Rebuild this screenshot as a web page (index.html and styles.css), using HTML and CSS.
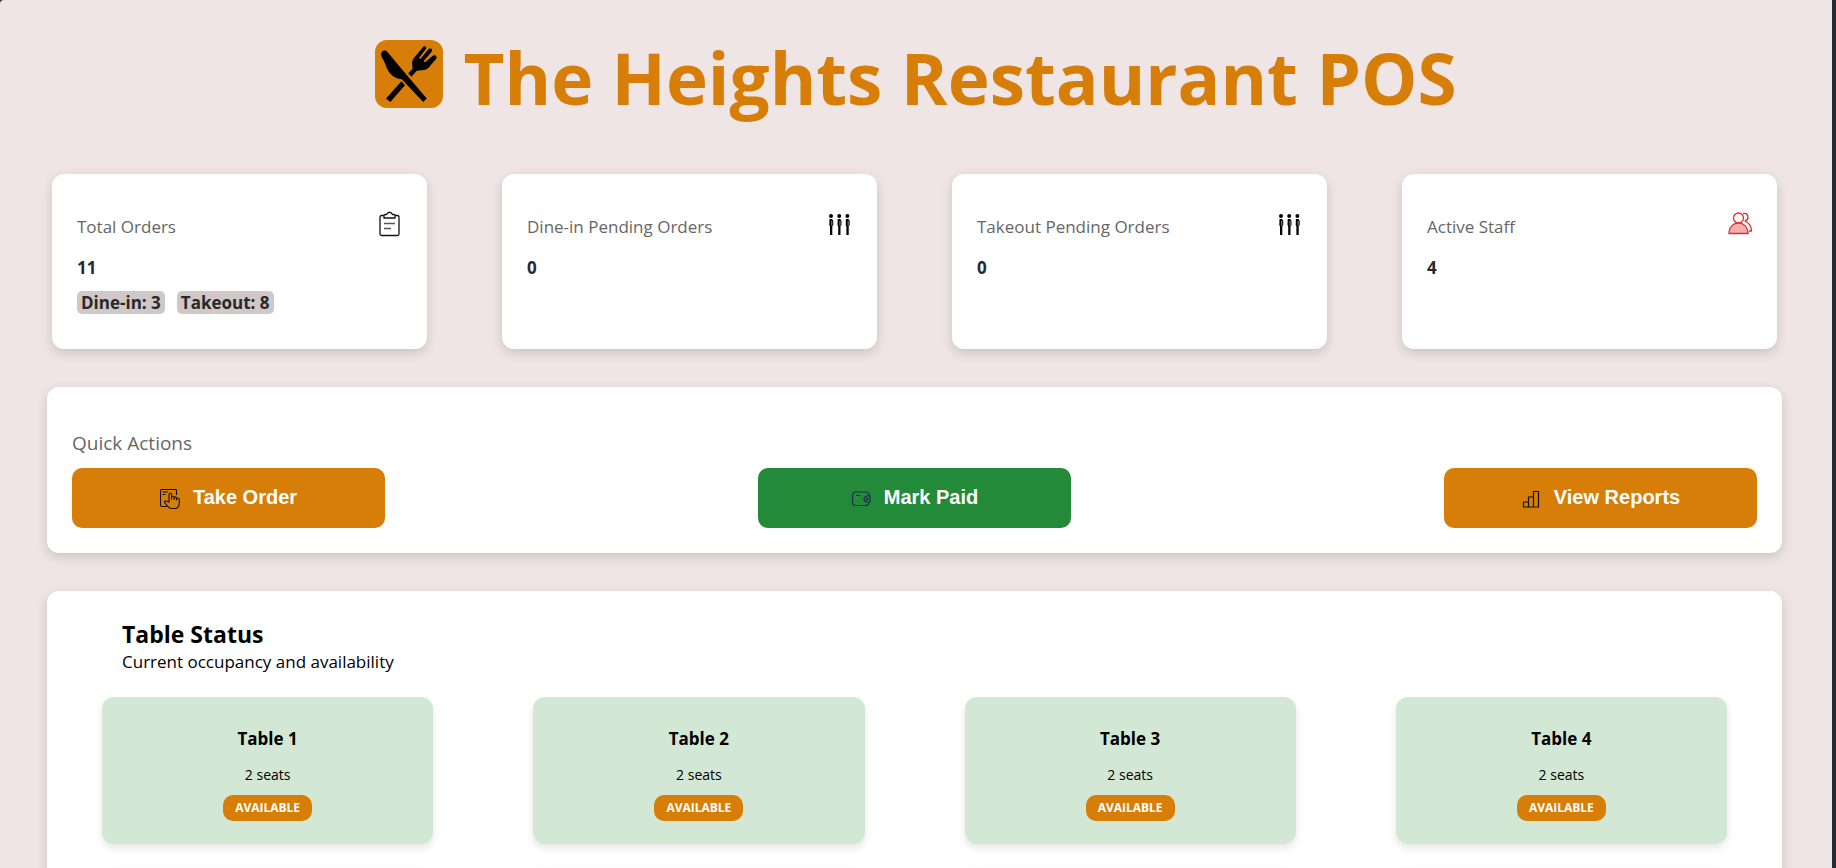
FILE: index.html
```html
<!DOCTYPE html>
<html lang="en">
<head>
<meta charset="utf-8">
<title>The Heights Restaurant POS</title>
<link rel="stylesheet" href="styles.css">
</head>
<body>
<svg width="0" height="0" class="defs" aria-hidden="true">
  <symbol id="people" viewBox="0 0 24 26">
    <g id="person"><circle cx="3" cy="5" r="2"/><path d="M1.500 8h2.600l1.200 2v4l-1 1.200V24H2v-8.500L1.300 14z"/><path d="M3.800 10v4.500" stroke="#fff" stroke-width=".6"/></g>
    <use href="#person" x="8.200"/><use href="#person" x="16.400"/>
  </symbol>
</svg>
<div class="page">
  <header class="header">
    <svg class="logo" viewBox="0 0 68 68" aria-hidden="true">
      <g transform="scale(.357 .333) translate(-45 -60)">
      <path d="M62 105C61 92 73 88 80 96L122 150L190 236L180 246L120 178C108 176 96 172 86 158C76 145 75 130 64 112Z"/>
      <path d="M119 184L129 196L88 246L76 236Z"/>
      <path d="M138 160L150 147L149 125Q150 120 154 114L178 83C183 74 193 80 187 88L168 114L172 117L193 90C199 81 209 88 203 96L181 124L185 127L206 108C213 102 221 110 216 117L195 143Q190 149 182 150L162 152L147 170Z"/>
      </g>
    </svg>
    <h1 class="title">The Heights Restaurant POS</h1>
  </header>
  <main class="content">
    <section class="stats">
      <article class="card stat">
        <div class="stat-head"><h2>Total Orders</h2>
          <svg class="icon" viewBox="0 0 24 26" fill="none" stroke="#111" stroke-width="1.300"><path d="M6 4.500H3.500q-1.500 0-1.500 1.500v17q0 1.500 1.500 1.500h16q1.500 0 1.500-1.500V6q0-1.500-1.500-1.500H17M6 7V4.500q0-1 1-1h1.500c1.500-3 4.500-3 6 0H16q1 0 1 1V7z"/><path d="M6 12.500h11M6 17.500h7" stroke="#555"/></svg></div>
        <p class="value">11</p>
        <div class="tags"><span class="tag">Dine-in: 3</span><span class="tag">Takeout: 8</span></div>
      </article>
      <article class="card stat">
        <div class="stat-head"><h2>Dine-in Pending Orders</h2><svg class="icon"><use href="#people"/></svg></div>
        <p class="value">0</p>
      </article>
      <article class="card stat">
        <div class="stat-head"><h2>Takeout Pending Orders</h2><svg class="icon"><use href="#people"/></svg></div>
        <p class="value">0</p>
      </article>
      <article class="card stat">
        <div class="stat-head"><h2>Active Staff</h2>
          <svg class="icon" viewBox="0 0 24 24" fill="none" stroke="#dc2f2f" stroke-width="1.300"><circle cx="10.500" cy="6" r="5"/><path d="M1 21.500c0-14 19-14 19 0z" fill="#f5aeae"/><path d="M15 1.500c6-1.500 6.500 6 2 7.500 4 2 6.500 5.500 6.500 10h-2.500"/></svg></div>
        <p class="value">4</p>
      </article>
    </section>
    <section class="card actions">
      <h2 class="actions-title">Quick Actions</h2>
      <div class="buttons">
        <button type="button" class="btn">
          <svg class="btn-icon" viewBox="0 0 20 20" fill="none" stroke="#111" stroke-width="1.100"><path d="M7 17.500H2Q.5 17.500.5 16V2Q.5.500 2 .5h13.500q1 0 1 1V6M2.500 3H8M2.500 5.500h3"/><path d="M9 13V5.500q0-1.500 1.300-1.500t1.300 1.500v5V8q1.300-1.500 2.600.3V11 8.500q1.300-1 2.400.5v2.500V9.500q1.500-.8 2.700.5v4q0 5.500-5 5.500h-2.600q-2.200 0-3.700-2L4.500 13.500Q4.500 11.500 6 12z"/></svg>Take Order</button>
        <button type="button" class="btn btn-paid">
          <svg class="btn-icon" viewBox="0 0 20 20" fill="none" stroke="#1c3050" stroke-width="1.200"><path d="M18 7V6.500q0-3.500-3.500-3.500H5Q1.500 3 1.500 6.500v7q0 3 3.500 3h9.500q3.500 0 3.500-3V13M5 6.500h4"/><path d="M19 7h-3q-3 .5-3 3t3 3h3z"/><circle cx="16" cy="10" r=".8"/></svg>Mark Paid</button>
        <button type="button" class="btn">
          <svg class="btn-icon" viewBox="0 0 20 20" fill="none" stroke="#111" stroke-width="1.200"><path d="M2.500 13h5v5h-5zM7.500 8h5v10h-5zM12.500 2.500h5V18h-5z"/></svg>View Reports</button>
      </div>
    </section>
    <section class="card tables">
      <h2 class="tables-title">Table Status</h2>
      <p class="tables-sub">Current occupancy and availability</p>
      <div class="table-grid">
        <article class="table-card"><h3>Table 1</h3><p>2 seats</p><span class="badge">AVAILABLE</span></article>
        <article class="table-card"><h3>Table 2</h3><p>2 seats</p><span class="badge">AVAILABLE</span></article>
        <article class="table-card"><h3>Table 3</h3><p>2 seats</p><span class="badge">AVAILABLE</span></article>
        <article class="table-card"><h3>Table 4</h3><p>2 seats</p><span class="badge">AVAILABLE</span></article>
        <article class="table-card"></article><article class="table-card"></article><article class="table-card"></article><article class="table-card"></article>
      </div>
    </section>
  </main>
</div>
</body>
</html>
```
FILE: styles.css
```css
* { box-sizing: border-box; }
body, h1, h2, h3, p { margin: 0; }
body {
  background: #242a36;
  color: #000;
  font-family: "Open Sans", "Noto Sans", sans-serif;
  font-size: 17px;
  line-height: 24px;
}
.defs { display: block; }
.page {
  height: 100vh;
  margin-right: 4px;
  overflow: hidden;
  background: #eee5e4;
  border-top-left-radius: 4px;
}
.header {
  display: flex;
  justify-content: center;
  gap: 20px;
  padding-top: 40px;
}
.logo {
  width: 68px;
  height: 68px;
  background: #d77e08;
  border-radius: 12px;
}
.title {
  color: #d77e08;
  font-size: 71px;
  line-height: 76px;
  font-weight: 700;
}
.content {
  display: flex;
  flex-direction: column;
  gap: 38px;
  padding: 58px 50px 0 47px;
}
.card {
  background: #fff;
  border-radius: 12px;
  box-shadow: 0 4px 12px rgba(0, 0, 0, .15);
}
.stats {
  display: grid;
  grid-template-columns: repeat(4, 1fr);
  gap: 75px;
  padding: 0 5px;
}
.stat {
  min-height: 175px;
  padding: 37px 25px 25px;
  color: #292929;
}
.stat-head {
  display: flex;
  justify-content: space-between;
}
.stat-head h2 {
  padding-top: 4px;
  color: #666;
  font-size: 17px;
  font-weight: 400;
}
.icon { width: 24px; height: 26px; }
.value { margin-top: 17px; font-weight: 700; }
.tags { display: flex; gap: 12px; margin-top: 11px; }
.tag {
  padding: 0 4px;
  border-radius: 5px;
  background: #cfc7c8;
  font-weight: 700;
  line-height: 23px;
}
.actions { padding: 44px 25px 25px; }
.actions-title {
  color: #666;
  font-size: 19px;
  line-height: 24px;
  font-weight: 400;
}
.buttons {
  display: flex;
  justify-content: space-between;
  margin-top: 13px;
}
.btn {
  display: flex;
  align-items: center;
  justify-content: center;
  gap: 13px;
  width: 313px;
  height: 60px;
  padding: 0 0 2px;
  border: 0;
  border-radius: 10px;
  background: #d77e08;
  color: #fff;
  font: 700 20px "Liberation Sans", Arial, sans-serif;
}
.btn-paid { background: #228a38; }
.btn-icon { width: 20px; height: 20px; margin-top: 4px; }
.tables { padding: 27px 55px; }
.tables-title {
  padding-left: 20px;
  font-size: 23px;
  line-height: 32px;
}
.tables-sub { padding-left: 20px; line-height: 24px; }
.table-grid {
  display: grid;
  grid-template-columns: repeat(4, 1fr);
  gap: 24px 100px;
  margin-top: 23px;
}
.table-card {
  min-height: 147px;
  padding: 30px 20px 20px;
  border-radius: 12px;
  background: #d2e7d4;
  box-shadow: 0 4px 8px rgba(0, 0, 0, .1);
  text-align: center;
}
.table-card h3 { font-size: 17px; }
.table-card p { margin-top: 12px; font-size: 14px; }
.badge {
  display: inline-block;
  margin-top: 8px;
  padding: 0 12px;
  border-radius: 10px;
  background: #d77e08;
  color: #fff;
  font-size: 12px;
  font-weight: 700;
  line-height: 26px;
}
```
